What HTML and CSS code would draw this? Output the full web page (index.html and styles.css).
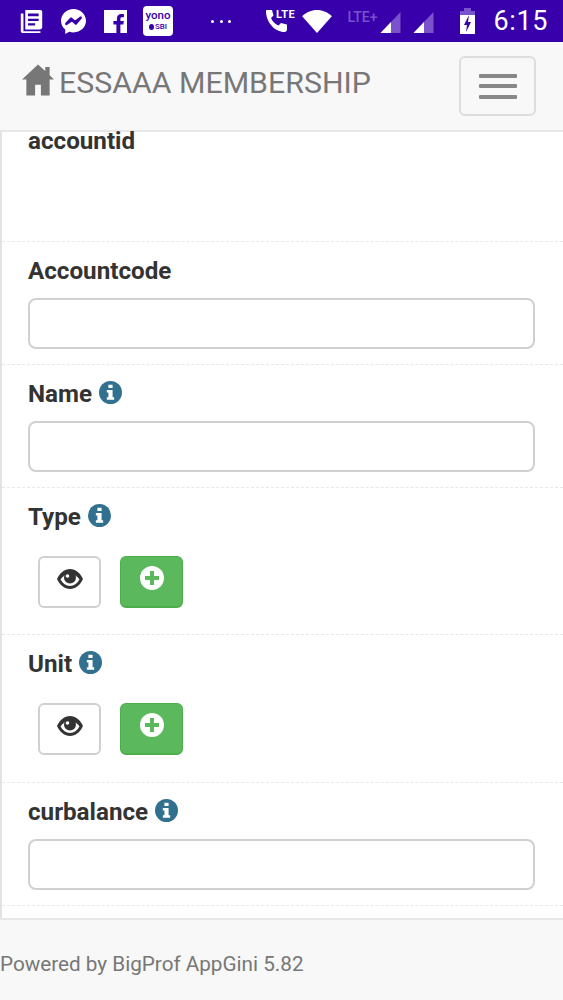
FILE: index.html
```html
<!DOCTYPE html>
<html lang="en">
<head>
<meta charset="utf-8">
<title>ESSAAA MEMBERSHIP</title>
<link rel="stylesheet" href="styles.css">
</head>
<body>
<div class="statusbar">
  <div class="status-left">
    <svg class="ic-news" viewBox="0 0 26 28"><path fill="#fff" d="M6 1h17a2 2 0 0 1 2 2v17a3 3 0 0 1-3 3H6z"/><path fill="#fff" d="M1 5h3v20h19v2H3a2 2 0 0 1-2-2z"/><path fill="#3700ab" d="M9 5h12v3H9zM9 11h12v2.500H9zM9 16h8v2.500H9z"/></svg>
    <svg class="ic-msg" viewBox="0 0 26 27"><path fill="#fff" d="M13 0C5.800 0 0 5.400 0 12.300c0 3.700 1.600 6.900 4.400 9.100V26l4.200-2.300c1.400.4 2.900.6 4.400.6 7.200 0 13-5.400 13-12S20.200 0 13 0z"/><path fill="none" stroke="#3700ab" stroke-width="2.600" stroke-linejoin="round" d="M5.500 15.500l5-5.500 4 3.500 6-4.500-5 6-4-3.500z"/></svg>
    <svg class="ic-fb" viewBox="0 0 23 23"><path fill="#fff" d="M0 0h23v23h-6.600v-8.600h2.900l.5-3.400h-3.400V8.900c0-1 .3-1.600 1.700-1.600h1.800V4.200c-.3 0-1.400-.1-2.600-.1-2.600 0-4.400 1.600-4.400 4.500V11H9.400v3.400h3v8.600H0z"/></svg>
    <div class="ic-yono"><span class="yono-a">yono</span><span class="yono-b"><i class="yono-dot"></i>SBI</span></div>
    <div class="dots"><i></i><i></i><i></i></div>
  </div>
  <div class="status-right">
    <svg class="ic-call" viewBox="0 0 34 26"><path fill="#fff" d="M1 2h5l1.500 5.500-2.500 2.500c1.500 3.500 4 6 7.500 7.500l2.500-2.500 6 1.500v5c0 1.500-1 2.500-2.500 2.500C9 24 0 14.500 0 3 0 2.500.3 2 1 2z"/><text x="10" y="10" class="lte-call">LTE</text></svg>
    <svg class="ic-wifi" viewBox="0 0 31 24"><path fill="#fff" d="M15.500 24L0 6.500C4 2.500 9.500 0 15.500 0S27 2.500 31 6.500z"/></svg>
    <span class="lte-plus">LTE+</span>
    <svg class="ic-sig" viewBox="0 0 21 22"><path fill="#7a52cc" d="M21 0v22H0z"/><path fill="#fff" d="M11 10.500V22H0z"/></svg>
    <svg class="ic-sig2" viewBox="0 0 21 22"><path fill="#7a52cc" d="M21 0v22H0z"/><path fill="#fff" d="M11 10.500V22H0z"/></svg>
    <svg class="ic-batt" viewBox="0 0 15 26"><path fill="#7a52cc" d="M4 0h7v3h4v7H0V3h4z"/><path fill="#fff" d="M0 7h15v19H0z"/><path fill="#3700ab" d="M9 7L4 17h3l-1 7 5-10H8z"/></svg>
    <span class="clock">6:15</span>
  </div>
</div>

<nav class="navbar">
  <a class="brand">
    <svg class="ic-home" viewBox="0 0 33 32"><path fill="#777" d="M16.500 0L0 15.500h4.500V32h9V21h6v11h9V15.500H33L28.500 11V2.500h-4.500v4.200z"/></svg>
    <span>ESSAAA MEMBERSHIP</span>
  </a>
  <button class="toggle" type="button" aria-label="Toggle navigation"><i></i><i></i><i></i></button>
</nav>

<main class="panel">
  <section class="row row-first">
    <label class="lbl">accountid</label>
  </section>
  <section class="row">
    <label class="lbl">Accountcode</label>
    <input class="field" type="text">
  </section>
  <section class="row">
    <label class="lbl">Name <svg class="ic-info" viewBox="0 0 22 22"><use href="#info"/></svg></label>
    <input class="field" type="text">
  </section>
  <section class="row row-btns">
    <label class="lbl">Type <svg class="ic-info" viewBox="0 0 22 22"><use href="#info"/></svg></label>
    <div class="btns">
      <button class="btn btn-view" type="button"><svg class="ic-eye" viewBox="0 0 26 20"><use href="#eye"/></svg></button>
      <button class="btn btn-add" type="button"><svg class="ic-plus" viewBox="0 0 24 24"><use href="#plus"/></svg></button>
    </div>
  </section>
  <section class="row row-btns">
    <label class="lbl">Unit <svg class="ic-info" viewBox="0 0 22 22"><use href="#info"/></svg></label>
    <div class="btns">
      <button class="btn btn-view" type="button"><svg class="ic-eye" viewBox="0 0 26 20"><use href="#eye"/></svg></button>
      <button class="btn btn-add" type="button"><svg class="ic-plus" viewBox="0 0 24 24"><use href="#plus"/></svg></button>
    </div>
  </section>
  <section class="row">
    <label class="lbl">curbalance <svg class="ic-info" viewBox="0 0 22 22"><use href="#info"/></svg></label>
    <input class="field" type="text">
  </section>
  <div class="row-tail"></div>
</main>

<footer class="footer">Powered by BigProf AppGini 5.82</footer>

<svg class="defs" width="0" height="0">
  <symbol id="info" viewBox="0 0 22 22">
    <circle cx="11" cy="11" r="11" fill="#31708f"/>
    <path fill="#fff" d="M9 3.500h4v3.200H9zM7.500 8.500H13v7h1.500v2.500h-7v-2.500H9v-4.500H7.500z"/>
  </symbol>
  <symbol id="eye" viewBox="0 0 26 20">
    <path fill="#333" d="M13 0C7.500 0 3 3.800 0 10c3 6.200 7.500 10 13 10s10-3.800 13-10C23 3.800 18.500 0 13 0z"/>
    <path fill="#fff" d="M13 5C9 5 5.800 7.200 3.500 10.500 5.800 14.600 9 17 13 17s7.200-2.400 9.500-6.500C20.200 7.200 17 5 13 5z"/>
    <circle cx="13" cy="8.500" r="6" fill="#333"/>
    <circle cx="10.500" cy="7" r="1.800" fill="#fff"/>
  </symbol>
  <symbol id="plus" viewBox="0 0 24 24">
    <circle cx="12" cy="12" r="12" fill="#fff"/>
    <path fill="#5cb85c" d="M10 5h4v5h5v4h-5v5h-4v-5H5v-4h5z"/>
  </symbol>
</svg>
</body>
</html>
```
FILE: styles.css
```css
* { box-sizing: border-box; }
html, body { margin: 0; padding: 0; }
body {
  width: 563px;
  height: 1000px;
  overflow: hidden;
  background: #f8f8f8;
  font-family: Roboto, "Liberation Sans", sans-serif;
  color: #333;
  display: flex;
  flex-direction: column;
}
.defs { position: absolute; }

.statusbar {
  height: 42px;
  flex: none;
  background: #3700ab;
  display: flex;
  justify-content: space-between;
  align-items: center;
  padding: 0 15px 0 19px;
}
.status-left, .status-right { display: flex; align-items: center; }
.ic-news { width: 25px; height: 25px; margin-right: 17px; }
.ic-msg { width: 25px; height: 26px; margin-right: 18px; margin-top: 1px; }
.ic-fb { width: 23px; height: 23px; margin-right: 16px; }
.ic-yono {
  width: 30px;
  height: 30px;
  background: #fff;
  border-radius: 4px;
  color: #3700ab;
  display: flex;
  flex-direction: column;
  align-items: center;
  justify-content: center;
  font-weight: 500;
  line-height: 1;
}
.yono-a { font-size: 11.500px; margin-top: -1px; }
.yono-b { font-size: 8px; margin-top: 1px; display: flex; align-items: center; gap: 1px; }
.yono-dot { width: 5px; height: 6px; border-radius: 50%; background: #3700ab; display: block; }
.dots { display: flex; gap: 5.500px; margin-left: 38px; }
.dots i { width: 3px; height: 3px; border-radius: 50%; background: #fff; display: block; }
.ic-call { width: 34px; height: 26px; margin-right: 2px; }
.lte-call { font: 700 11px Roboto, sans-serif; letter-spacing: .5px; fill: #fff; }
.ic-wifi { width: 30px; height: 23px; margin-right: 15px; }
.lte-plus { font-size: 14px; color: #7a52cc; font-weight: 500; margin-right: 2px; margin-top: -9px; }
.ic-sig { width: 21px; height: 21px; margin-top: 3px; margin-right: 12px; }
.ic-sig2 { width: 21px; height: 21px; margin-top: 3px; margin-right: 26px; }
.ic-batt { width: 15px; height: 26px; margin-right: 19px; }
.clock { color: #fff; font-size: 27px; line-height: 42px; letter-spacing: .6px; }

.navbar {
  height: 90px;
  flex: none;
  background: #f8f8f8;
  border-bottom: 2px solid #e7e7e7;
  display: flex;
  justify-content: space-between;
  align-items: flex-start;
  padding: 14px 27px 0 22px;
}
.brand {
  display: flex;
  align-items: center;
  color: #777;
  font-size: 30.300px;
  line-height: 32px;
  margin-top: 11px;
}
.ic-home { width: 32px; height: 32px; margin-right: 5px; margin-top: -7px; }
.toggle {
  width: 77px;
  height: 60px;
  background: transparent;
  border: 2px solid #ddd;
  border-radius: 6px;
  padding: 0;
  display: flex;
  flex-direction: column;
  align-items: center;
  justify-content: center;
  gap: 6.500px;
}
.toggle i { display: block; width: 38px; height: 4px; border-radius: 1px; background: #888; }

.panel {
  height: 788px;
  flex: none;
  background: #fff;
  border-left: 2px solid #e3e3e3;
  border-bottom: 2px solid #e7e7e7;
}
.row {
  height: 123px;
  padding: 16px 26px 0 26px;
  border-bottom: 1px dashed #e8e8e8;
}
.row-first { height: 110px; padding-top: 0; }
.row-btns { height: 147px; }
.row-btns + .row-btns { height: 148px; }
.lbl {
  display: flex;
  align-items: center;
  gap: 7px;
  font-size: 24.200px;
  line-height: 27px;
  font-weight: 700;
  color: #333;
  height: 27px;
  margin-bottom: 12px;
}
.row-first .lbl { height: 18px; line-height: 18px; margin: 0; }
.ic-info { width: 23px; height: 23px; margin-top: -4px; }
.field {
  display: block;
  width: 507px;
  height: 51px;
  margin-top: 13px;
  background: #fff;
  border: 2px solid #d0d0d0;
  border-radius: 8px;
  padding: 0 12px;
}
.btns { display: flex; gap: 19px; padding: 13px 0 0 10px; }
.btn {
  width: 63px;
  height: 52px;
  border-radius: 6px;
  padding: 0 0 7px;
  display: flex;
  align-items: center;
  justify-content: center;
}
.btn-view { background: #fff; border: 2px solid #d0d0d0; }
.btn-add { background: #5cb85c; border: 1px solid #4cae4c; border-bottom-width: 2px; }
.ic-eye { width: 26px; height: 20px; }
.ic-plus { width: 24px; height: 24px; }

.footer {
  flex: 1;
  padding-top: 32px;
  font-size: 20.700px;
  line-height: 24px;
  color: #777;
  background: #f8f8f8;
}
```
